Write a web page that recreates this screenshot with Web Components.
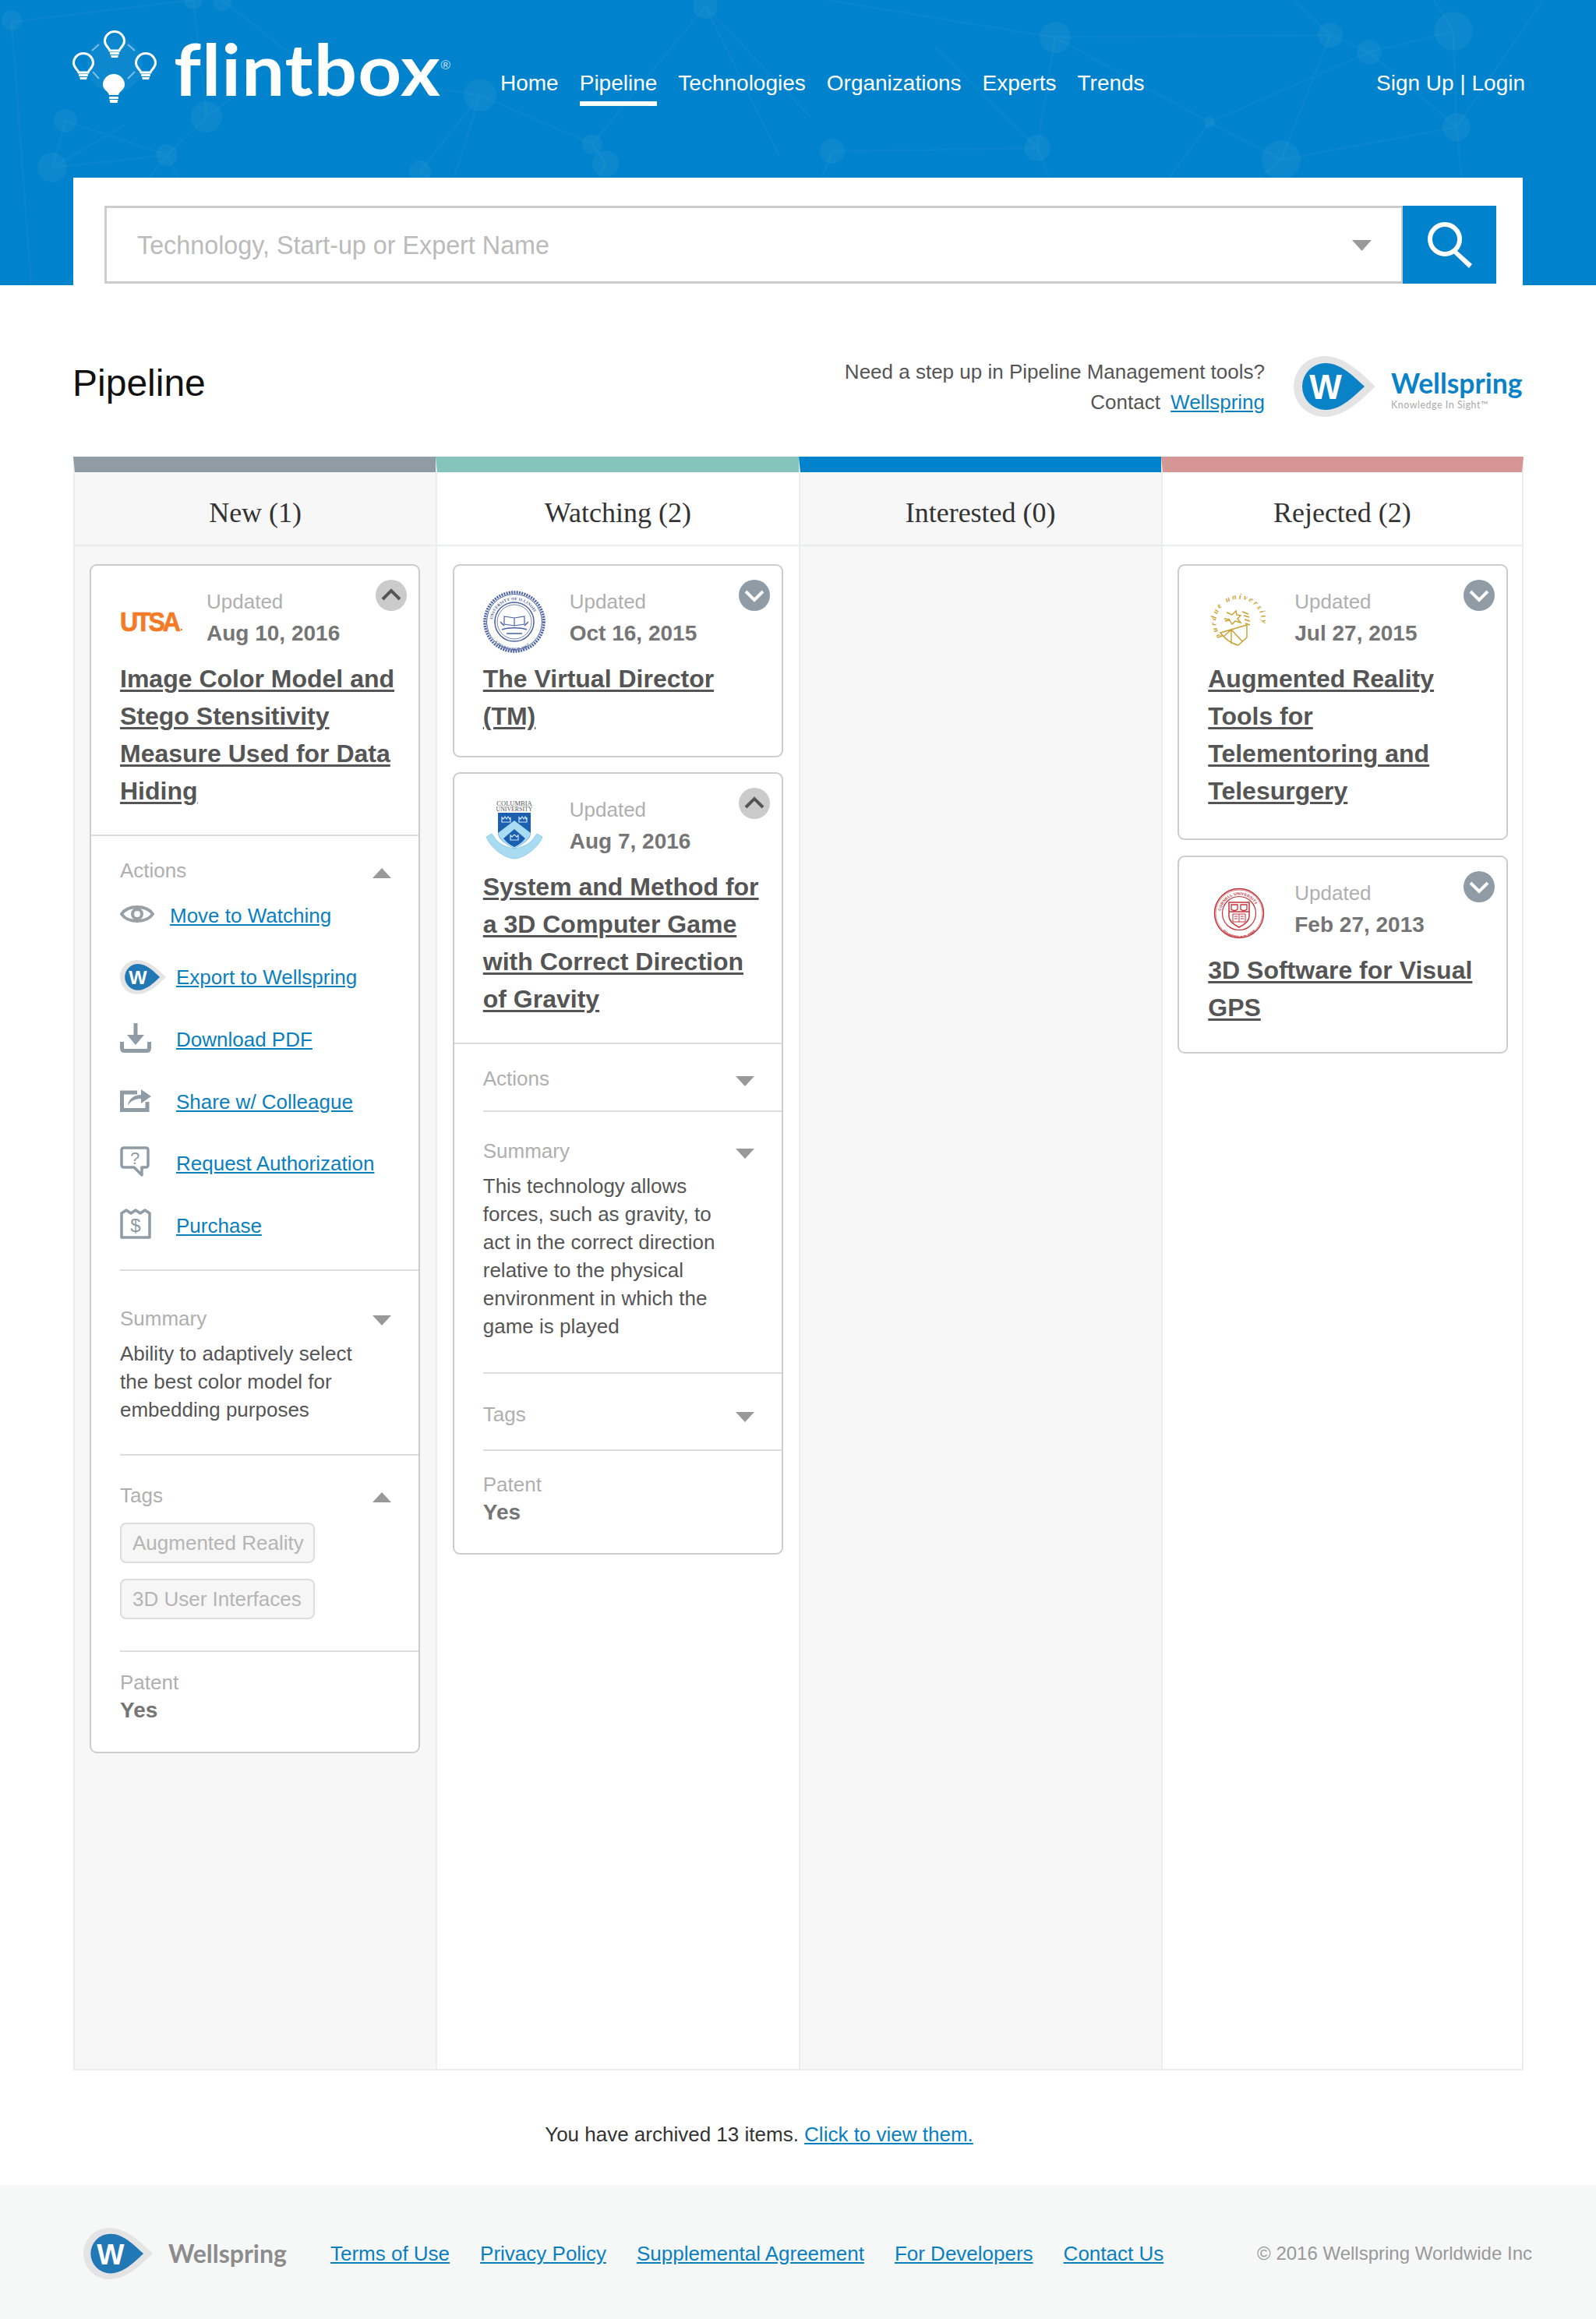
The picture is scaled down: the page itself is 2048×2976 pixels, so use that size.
<!DOCTYPE html>
<html lang="en">
<head>
<meta charset="utf-8">
<title>Flintbox Pipeline</title>
<style>
    html, body { margin: 0; background: #fff; }
    body { font-family: 'Liberation Sans', Arial, sans-serif; color: #555; }
</style>
</head>
<body>
<fb-page>
    <fb-header active="Pipeline"></fb-header>
    <fb-intro></fb-intro>
    <fb-board>
        <fb-column label="New (1)" stripe="#8f9ca5" tint>
            <fb-card org="utsa" date="Aug 10, 2016" heading="Image Color Model and Stego Stensitivity Measure Used for Data Hiding" open style="--tb:32px">
                <fb-section label="Actions" arrow="up" full style="--pt:26px;--pb:16px">
                    <fb-action icon="eye" href="#" narrow>Move to Watching</fb-action>
                    <fb-action icon="wellspring" href="#">Export to Wellspring</fb-action>
                    <fb-action icon="download" href="#">Download PDF</fb-action>
                    <fb-action icon="share" href="#">Share w/ Colleague</fb-action>
                    <fb-action icon="question" href="#">Request Authorization</fb-action>
                    <fb-action icon="purchase" href="#">Purchase</fb-action>
                </fb-section>
                <fb-section label="Summary" arrow="down" style="--pt:43px;--pb:39px">
                    <fb-text>Ability to adaptively select the best color model for embedding purposes</fb-text>
                </fb-section>
                <fb-section label="Tags" arrow="up" style="--pt:33px;--pb:40px">
                    <fb-tags>
                        <fb-tag>Augmented Reality</fb-tag>
                        <fb-tag>3D User Interfaces</fb-tag>
                    </fb-tags>
                </fb-section>
                <fb-patent value="Yes" style="--pt:21px;--pb:35px"></fb-patent>
            </fb-card>
        </fb-column>
        <fb-column label="Watching (2)" stripe="#84c4bc">
            <fb-card org="illinois" date="Oct 16, 2015" heading="The Virtual Director (TM)" style="--tb:27px"></fb-card>
            <fb-card org="columbia" date="Aug 7, 2016" heading="System and Method for a 3D Computer Game with Correct Direction of Gravity" open style="--tb:32px">
                <fb-section label="Actions" arrow="down" full style="--pt:26px;--pb:23px"></fb-section>
                <fb-section label="Summary" arrow="down" style="--pt:32px;--pb:41px">
                    <fb-text>This technology allows forces, such as gravity, to act in the correct direction relative to the physical environment in which the game is played</fb-text>
                </fb-section>
                <fb-section label="Tags" arrow="down" style="--pt:34px;--pb:27px"></fb-section>
                <fb-patent value="Yes" style="--pt:25px;--pb:34px"></fb-patent>
            </fb-card>
        </fb-column>
        <fb-column label="Interested (0)" stripe="#0082cc" tint></fb-column>
        <fb-column label="Rejected (2)" stripe="#d59694">
            <fb-card org="purdue" date="Jul 27, 2015" heading="Augmented Reality Tools for Telementoring and Telesurgery" style="--tb:37px"></fb-card>
            <fb-card org="cornell" date="Feb 27, 2013" heading="3D Software for Visual GPS" style="--tb:33px;margin-top:1px"></fb-card>
        </fb-column>
    </fb-board>
    <fb-archive count="13"></fb-archive>
    <fb-footer></fb-footer>
</fb-page>

<script>
// Small helper: every element gets an open shadow root filled from one render()
class FbElement extends HTMLElement {
    constructor() {
        super();
        this.root = this.attachShadow({ mode: 'open' });
    }
    connectedCallback() {
        this.root.innerHTML = this.render();
    }
}

class FbPage extends FbElement {
    render() {
        return `<style>:host { display: block; width: 2048px; }</style><slot></slot>`;
    }
}

class WellspringMark extends FbElement {
    render() {
        const w = this.getAttribute('width') || 105;
        const blue = this.getAttribute('blue') || '#0a82c8';
        return `
            <style>:host { display: block; line-height: 0; } svg { display: block; }</style>
            <svg width="${w}" viewBox="0 0 105 78">
                <path d="M105 39C85 20 65 0 39 0A39 39 0 0 0 39 78C65 78 85 58 105 39Z" fill="#e4e4e4"/>
                <path d="M91 39C76 25 60 9 41 9A30 30 0 0 0 41 69C60 69 76 53 91 39Z" fill="${blue}"/>
                <text x="41" y="55" text-anchor="middle" font-family="Liberation Sans, sans-serif" font-weight="700" font-size="44" fill="#fff">W</text>
            </svg>`;
    }
}

class FbHeader extends FbElement {
    render() {
        const active = this.getAttribute('active');
        const links = ['Home', 'Pipeline', 'Technologies', 'Organizations', 'Experts', 'Trends']
            .map(t => `<a href="#" class="${t === active ? 'on' : ''}">${t}</a>`).join('');
        return `
            <style>
                :host { display: block; height: 366px; background: #0082cc; position: relative; overflow: hidden; }
                .net { position: absolute; left: 0; top: 0; }
                .bar { position: relative; height: 228px; display: flex; align-items: flex-start; padding-right: 91px; box-sizing: border-box; }
                .bulbs { margin: 30px 0 0 90px; flex: none; }
                .word { flex: none; width: 350px; margin: 38px 0 0 18px; font: 700 92px/100px Lato, sans-serif; color: #fff; letter-spacing: 1px; position: relative; transform: scaleX(1.06); transform-origin: left top; }
                .word sup { position: absolute; left: 323px; top: 37px; font: 400 16px/18px 'Liberation Sans', sans-serif; letter-spacing: 0; opacity: .75; }
                nav { display: flex; gap: 27px; margin: 88px 0 0 69px; }
                a { color: #fff; text-decoration: none; font-size: 28px; line-height: 38px; display: block; }
                nav a { height: 48px; box-sizing: border-box; }
                nav a.on { border-bottom: 6px solid #fff; }
                .auth { margin: 88px 0 0 auto; font-size: 28px; line-height: 38px; color: #fff; white-space: nowrap; }
                .auth a { display: inline; }
                .panel { position: relative; width: 1860px; height: 138px; margin-left: 94px; background: #fff; padding: 36px 34px 0 40px; box-sizing: border-box; display: flex; }
                .field { flex: 1; height: 100px; box-sizing: border-box; border: 3px solid #ccc; border-right-width: 2px; display: flex; align-items: center; padding: 2px 38px 0 39px; font-size: 32.300px; color: #bbb; }
                .field span { flex: 1; }
                .go { width: 120px; height: 100px; background: #0082cc; display: flex; align-items: center; justify-content: center; flex: none; }
            </style>
            <svg class="net" width="2048" height="366" fill="none">
                <g stroke="#fff" stroke-opacity=".03" stroke-width="3">
                    <path d="M15 28L248 0M15 28L40 366M248 0L265 150M285 0L400 90L616 122M84 155L214 199L265 150M84 155L67 215L214 199L300 366M265 150L350 85M616 122L540 366M616 122L760 185L777 210M777 210L700 366M760 185L905 8M905 8L1000 200M905 8L1040 150M1068 194L1331 190M1068 194L1000 366M1354 48L1707 45M1354 48L1060 0M1354 48L1552 157L1644 205M1354 48L1331 190L1400 366M1331 190L1200 60M1552 157L1757 67M1552 157L1400 366M1644 205L1869 163M1644 205L1707 45M1644 205L1450 366M1757 67L1865 40M1757 67L1869 163M1865 40L1869 163M1707 45L1757 67M1707 45L1660 0M1865 40L1840 0M1869 163L1890 366M1869 163L1980 0M539 220L777 366M539 220L616 122M160 160L67 215M214 199L84 366"/>
                </g>
                <g fill="#fff" fill-opacity=".05">
                    <circle cx="15" cy="26" r="13"/><circle cx="248" cy="0" r="12"/><circle cx="285" cy="2" r="12"/><circle cx="905" cy="8" r="16"/>
                    <circle cx="616" cy="122" r="21"/><circle cx="265" cy="150" r="20"/><circle cx="84" cy="155" r="15"/><circle cx="67" cy="215" r="19"/>
                    <circle cx="214" cy="199" r="14"/><circle cx="760" cy="185" r="13"/><circle cx="777" cy="210" r="17"/><circle cx="539" cy="220" r="14"/>
                    <circle cx="1354" cy="48" r="20"/><circle cx="1707" cy="45" r="16"/><circle cx="1757" cy="67" r="16"/><circle cx="1865" cy="40" r="25"/>
                    <circle cx="1552" cy="157" r="7"/><circle cx="1869" cy="163" r="18"/><circle cx="1644" cy="205" r="25"/><circle cx="1331" cy="190" r="17"/><circle cx="1068" cy="194" r="16"/>
                </g>
            </svg>
            <div class="bar">
                <svg class="bulbs" width="115" height="105" viewBox="90 30 115 105" fill="none" stroke="#fff">
                    <circle cx="147" cy="83" r="36" fill="#fff" fill-opacity=".05" stroke="none"/>
                    <path d="M127 57L118 65M164 57L173 65M119 92L127 101M173 92L164 101" stroke-width="2" stroke-opacity=".45"/>
                    <g stroke-width="3">
                        <path transform="translate(147 54)" d="M-6 11C-7 7-12.500 5-12.500-1A12.500 12.500 0 1 1 12.500-1C12.500 5 7 7 6 11Z"/>
                        <path transform="translate(107 82)" d="M-6 11C-7 7-12.500 5-12.500-1A12.500 12.500 0 1 1 12.500-1C12.500 5 7 7 6 11Z"/>
                        <path transform="translate(187 82)" d="M-6 11C-7 7-12.500 5-12.500-1A12.500 12.500 0 1 1 12.500-1C12.500 5 7 7 6 11Z"/>
                    </g>
                    <g fill="#fff" stroke="none">
                        <rect x="141" y="67" width="12" height="3" rx="1"/><path d="M142 71h10l-1 3h-8z"/>
                        <rect x="101" y="95" width="12" height="3" rx="1"/><path d="M102 99h10l-1 3h-8z"/>
                        <rect x="181" y="95" width="12" height="3" rx="1"/><path d="M182 99h10l-1 3h-8z"/>
                        <path d="M140 122C139 117 132 115 132 109A14 14 0 1 1 160 109C160 115 153 117 152 122Z"/>
                        <rect x="140" y="124" width="12" height="3" rx="1"/><path d="M140.500 128h11l-1 4h-9z"/>
                    </g>
                </svg>
                <div class="word">flintbox<sup>®</sup></div>
                <nav>${links}</nav>
                <div class="auth"><a href="#">Sign Up</a> | <a href="#">Login</a></div>
            </div>
            <div class="panel">
                <div class="field">
                    <span>Technology, Start-up or Expert Name</span>
                    <svg width="25" height="14" viewBox="0 0 25 14"><path d="M0 0H25L12.500 14Z" fill="#999"/></svg>
                </div>
                <div class="go">
                    <svg width="60" height="60" viewBox="0 0 60 60" fill="none" stroke="#fff">
                        <circle cx="24" cy="23" r="19" stroke-width="6"/>
                        <path d="M35 41L40 38L59 55L55 60Z" fill="#fff" stroke="none"/>
                    </svg>
                </div>
            </div>`;
    }
}

class FbIntro extends FbElement {
    render() {
        return `
            <style>
                :host { display: flex; align-items: center; height: 220px; box-sizing: border-box; padding: 40px 93px 0 93px; }
                h1 { margin: -8px auto 0 0; font-weight: 400; font-size: 48px; line-height: 56px; color: #111; }
                .pitch { text-align: right; font-size: 26px; line-height: 39px; color: #555; margin-top: 2px; }
                a { color: #0a7fc0; margin-left: 6px; }
                .brand { display: flex; align-items: center; margin-left: 37px; }
                .name { margin: 8px 0 0 20px; width: 170px; }
                .name b { display: block; font: 700 35.500px/38px Lato, sans-serif; color: #0a82c8; white-space: nowrap; }
                .name small { display: block; font: 400 12.500px/14px Lato, sans-serif; color: #aaa; letter-spacing: .5px; margin-top: 2px; }
            </style>
            <h1>Pipeline</h1>
            <div class="pitch">Need a step up in Pipeline Management tools?<br>Contact <a href="#">Wellspring</a></div>
            <div class="brand">
                <wellspring-mark width="105"></wellspring-mark>
                <div class="name"><b>Wellspring</b><small>Knowledge In Sight™</small></div>
            </div>`;
    }
}

class FbBoard extends FbElement {
    render() {
        return `
            <style>
                :host { display: grid; grid-template-columns: repeat(4, 465.250px); width: 1861px; height: 2071px; margin-left: 94px; }
            </style>
            <slot></slot>`;
    }
}

class FbColumn extends FbElement {
    render() {
        return `
            <style>
                :host { display: flex; flex-direction: column; box-sizing: border-box; border-top: 20px solid ${this.getAttribute('stripe')}; border-left: 2px solid #eceded; border-bottom: 2px solid #eceded; background: #fff; min-width: 0; }
                :host([tint]) { background: #f7f7f7; }
                :host(:last-child) { border-right: 2px solid #eceded; }
                h2 { margin: 0; height: 93px; border-bottom: 2px solid #eceded; font: 400 36px/104px 'Liberation Serif', serif; color: #333; text-align: center; flex: none; }
                .cards { display: flex; flex-direction: column; gap: 19px; padding: 23px 0 0 19.500px; }
                :host(:first-child) .cards { padding-left: 19px; }
            </style>
            <h2>${this.getAttribute('label')}</h2>
            <div class="cards"><slot></slot></div>`;
    }
}

class OrgLogo extends FbElement {
    render() {
        const sans = 'Liberation Sans, sans-serif';
        const serif = 'Liberation Serif, serif';
        const logos = {
            utsa: `<text transform="translate(0 52) scale(.92 1)" font-family="${sans}" font-weight="700" font-size="35" letter-spacing="-3.500" stroke="#f47b25" stroke-width=".7" fill="#f47b25">UTSA</text><circle cx="79" cy="50" r="1.200" fill="#f47b25"/>`,
            illinois: `
                <g fill="none" stroke="#4a62a4">
                    <circle cx="40" cy="40" r="38" stroke-width="3.500" stroke-dasharray="2 1.300"/>
                    <circle cx="40" cy="40" r="35.500" stroke-width="1"/>
                    <circle cx="40" cy="40" r="25" stroke-width="1.500"/>
                    <circle cx="40" cy="40" r="22" stroke-width=".8"/>
                    <path d="M27 33l13 2 13-2v10l-13 2-13-2zM40 35v10" stroke-width="1.200"/>
                    <path d="M24 50c8-3 24-3 32 0M30 55h20M22 40l5 5M58 40l-5 5" stroke-width="1.500"/>
                </g>
                <path id="ilT" d="M12 40A28 28 0 0 1 68 40" fill="none"/>
                <path id="ilB" d="M7 44A33 33 0 0 0 73 44" fill="none"/>
                <text font-family="${serif}" font-weight="700" font-size="5.200" letter-spacing=".3" fill="#3f5599"><textPath href="#ilT" startOffset="3">UNIVERSITY OF ILLINOIS</textPath></text>
                <text font-family="${serif}" font-weight="700" font-size="5.200" letter-spacing=".3" fill="#3f5599"><textPath href="#ilB" startOffset="24">CHARTERED 1867</textPath></text>`,
            columbia: `
                <text x="40" y="9" text-anchor="middle" font-family="${serif}" font-size="8.500" fill="#555">COLUMBIA</text>
                <text x="40" y="16" text-anchor="middle" font-family="${serif}" font-size="7.800" fill="#555">UNIVERSITY</text>
                <path d="M4 49c3 9 18 26 36 28 18-2 33-19 36-28l-7-4-5 7c-6 7-15 11-24 12-9-1-18-5-24-12l-5-7z" fill="#a9dcf2" stroke="#8ecfe9"/>
                <path d="M19 18H61V44C61 52 50 59 40 64 30 59 19 52 19 44Z" fill="#1a5fb0"/>
                <path d="M40 28L61 44C60 52 50 59 40 64 30 59 20 52 19 44Z" fill="#a9dcf2"/>
                <path d="M40 39L54 51C50 56 46 59 40 62 34 59 30 56 26 51Z" fill="#1a5fb0"/>
                <g fill="none" stroke="#cfe8f6" stroke-width="1.200">
                    <path d="M24 24l2 2 2-3 2 3 2-3 2 3 1-2v6H24zM46 24l2 2 2-3 2 3 2-3 1 3 1-2v6H46z"/>
                    <path d="M35 47l2 2 3-3 3 3 2-2v6H35z"/>
                </g>`,
            purdue: `
                <path id="puC" d="M17 59A29.500 29.500 0 1 1 54 66" fill="none"/>
                <text font-family="${serif}" font-style="italic" font-weight="700" font-size="10" letter-spacing="2.600" fill="#c8a02e"><textPath href="#puC">purdue university</textPath></text>
                <g fill="none" stroke="#c8a02e" stroke-width="1.400">
                    <path d="M16 54L50 44 50 60 39 70C30 68 22 62 16 54ZM30 50L30 68M30 50L44 65M30 50L20 59"/>
                    <path d="M24 28l7 3 5-5 1 5 5 1-4 4 4 5-7-2-4 4-3-5-6 1M21 36l7 1M44 27l8 3M46 32l7 2M47 37l7 2M48 42l6 2"/>
                </g>`,
            cornell: `
                <g fill="none" stroke="#c5333a">
                    <circle cx="40" cy="40" r="31.500" stroke-width="1.500"/>
                    <circle cx="40" cy="40" r="30" stroke-width=".6"/>
                    <circle cx="40" cy="40" r="21.500" stroke-width="1.200"/>
                    <path d="M27 26H53V44C53 51 46 55 40 58 34 55 27 51 27 44Z" stroke-width="1.500"/>
                    <path d="M27 38H53M30 29h8v6c-2 2-6 2-8 0zM42 29h8v6c-2 2-6 2-8 0z" stroke-width="1.300"/>
                    <path d="M32 41h16v10H32zM40 41v10M34 44h4M34 47h4M42 44h4M42 47h4" stroke-width="1"/>
                </g>
                <path id="coT" d="M16.500 40A23.500 23.500 0 0 1 63.500 40" fill="none"/>
                <path id="coB" d="M11 43A29 29 0 0 0 69 43" fill="none"/>
                <text font-family="${sans}" font-weight="700" font-size="5" letter-spacing=".2" fill="#c5333a"><textPath href="#coT" startOffset="3">CORNELL UNIVERSITY</textPath></text>
                <text font-family="${sans}" font-weight="700" font-size="4.500" letter-spacing=".2" fill="#c5333a"><textPath href="#coB" startOffset="22">FOUNDED A.D. 1865</textPath></text>`
        };
        return `
            <style>:host { display: block; width: 80px; height: 80px; } svg { display: block; }</style>
            <svg width="80" height="80" viewBox="0 0 80 80">${logos[this.getAttribute('kind')]}</svg>`;
    }
}

class FbCard extends FbElement {
    render() {
        const open = this.hasAttribute('open');
        return `
            <style>
                :host { display: block; width: 424px; box-sizing: border-box; border: 2px solid #ccc; border-radius: 9px; background: #fff; position: relative; }
                .toggle { position: absolute; right: 15px; top: 18px; display: block; }
                .head { display: flex; padding: 27px 0 0 37px; }
                org-logo { flex: none; margin: 5px 31px 0 0; }
                .meta { font-size: 26px; line-height: 39px; color: #afafaf; }
                .meta b { display: block; color: #757575; font-size: 28px; margin-top: 1px; }
                h3 { margin: 0; padding: 9px 25px var(--tb) 37px; font-size: 32px; line-height: 48px; font-weight: 700; }
                h3 a { color: #555; text-decoration-thickness: 3px; text-underline-offset: 3px; }
            </style>
            <svg class="toggle" width="40" height="40" viewBox="0 0 40 40" fill="none">
                <circle cx="20" cy="20" r="20" fill="${open ? '#cbcbcb' : '#8f9ca5'}"/>
                <path d="${open ? 'M9 25L20 14 31 25' : 'M9 15L20 26 31 15'}" stroke="${open ? '#555' : '#fff'}" stroke-width="4"/>
            </svg>
            <div class="head">
                <org-logo kind="${this.getAttribute('org')}"></org-logo>
                <div class="meta">Updated<b>${this.getAttribute('date')}</b></div>
            </div>
            <h3><a href="#">${this.getAttribute('heading')}</a></h3>
            <slot></slot>`;
    }
}

class FbSection extends FbElement {
    render() {
        const up = this.getAttribute('arrow') === 'up';
        return `
            <style>
                :host { display: block; border-top: 2px solid #ddd; margin-left: 37px; padding: var(--pt) 35px var(--pb) 0; }
                :host([full]) { margin-left: 0; padding-left: 37px; }
                .top { display: flex; justify-content: space-between; align-items: center; font-size: 26px; line-height: 36px; color: #afafaf; }
                svg { display: block; margin-top: 6px; }
            </style>
            <div class="top">
                <span>${this.getAttribute('label')}</span>
                <svg width="24" height="13" viewBox="0 0 24 13"><path d="${up ? 'M0 13L12 0 24 13Z' : 'M0 0H24L12 13Z'}" fill="#999"/></svg>
            </div>
            <slot></slot>`;
    }
}

const ACTION_ICONS = {
    eye: `<svg width="44" height="30" viewBox="0 0 44 30" fill="none" stroke="#999fa4" stroke-width="4"><path d="M2 15C10 3 34 3 42 15 34 27 10 27 2 15Z"/><circle cx="22" cy="15" r="6"/></svg>`,
    wellspring: `<wellspring-mark width="59" blue="#2277b5"></wellspring-mark>`,
    download: `<svg width="40" height="38" viewBox="0 0 40 38" fill="none" stroke="#8f9ca5"><path d="M20 0V20" stroke-width="5"/><path d="M9 15H31L20 28Z" fill="#8f9ca5" stroke="none"/><path d="M2.500 24V32Q2.500 35.500 6 35.500H34Q37.500 35.500 37.500 32V24" stroke-width="5"/></svg>`,
    share: `<svg width="40" height="30" viewBox="0 0 40 30" fill="none"><path d="M22 5H2.500V27.500H35V17" stroke="#8f9ca5" stroke-width="5"/><path d="M10 22C11 13 18 8 27 8V1L40 10 27 19V13C20 13 14 15 10 22Z" fill="#8f9ca5"/></svg>`,
    question: `<svg width="38" height="40" viewBox="0 0 38 40" fill="none"><path d="M5 2H33Q36 2 36 5V24Q36 27 33 27H28V37L18 27H5Q2 27 2 24V5Q2 2 5 2Z" stroke="#8f9ca5" stroke-width="3.500" stroke-linejoin="round"/><text x="19" y="23" text-anchor="middle" font-family="Liberation Sans, sans-serif" font-size="22" fill="#8f9ca5">?</text></svg>`,
    purchase: `<svg width="40" height="40" viewBox="0 0 40 40" fill="none"><path d="M2 6L8 2 14 6 20 2 26 6 32 2 38 6V37H2Z" stroke="#8f9ca5" stroke-width="3.500" stroke-linejoin="round"/><text x="20" y="30" text-anchor="middle" font-family="Liberation Sans, sans-serif" font-size="24" fill="#8f9ca5">$</text></svg>`
};

class FbAction extends FbElement {
    render() {
        return `
            <style>
                :host { display: flex; align-items: center; height: 79.600px; }
                .ico { flex: none; width: 72px; }
                :host([narrow]) .ico { width: 64px; }
                a { color: #0a7fc0; font-size: 26px; line-height: 36px; }
            </style>
            <div class="ico">${ACTION_ICONS[this.getAttribute('icon')]}</div>
            <a href="${this.getAttribute('href')}"><slot></slot></a>`;
    }
}

class FbText extends FbElement {
    render() {
        return `
            <style>:host { display: block; max-width: 320px; margin-top: 9px; font-size: 26px; line-height: 36px; color: #555; }</style>
            <slot></slot>`;
    }
}

class FbTags extends FbElement {
    render() {
        return `
            <style>:host { display: inline-flex; flex-direction: column; gap: 20px; margin-top: 17px; }</style>
            <slot></slot>`;
    }
}

class FbTag extends FbElement {
    render() {
        return `
            <style>:host { display: block; box-sizing: border-box; height: 52px; padding: 0 12px 0 14px; border: 2px solid #ddd; border-radius: 8px; background: #f6f6f6; font-size: 26px; line-height: 48px; color: #b5b5b5; white-space: nowrap; }</style>
            <slot></slot>`;
    }
}

class FbPatent extends FbElement {
    render() {
        return `
            <style>
                :host { display: block; border-top: 2px solid #ddd; margin-left: 37px; padding: var(--pt) 0 var(--pb) 0; font-size: 26px; line-height: 36px; color: #afafaf; }
                b { display: block; font-size: 28px; color: #757575; }
            </style>
            Patent<b>${this.getAttribute('value')}</b>`;
    }
}

class FbArchive extends FbElement {
    render() {
        return `
            <style>
                :host { display: block; height: 147px; box-sizing: border-box; padding: 64px 100px 0 0; text-align: center; font-size: 26px; line-height: 36px; color: #333; }
                a { color: #0a7fc0; }
            </style>
            You have archived ${this.getAttribute('count')} items. <a href="#">Click to view them.</a>`;
    }
}

class FbFooter extends FbElement {
    render() {
        const links = ['Terms of Use', 'Privacy Policy', 'Supplemental Agreement', 'For Developers', 'Contact Us']
            .map(t => `<a href="#">${t}</a>`).join('');
        return `
            <style>
                :host { display: flex; align-items: center; height: 172px; box-sizing: border-box; background: #f6f7f7; padding: 4px 82px 0 107px; }
                .name { margin-left: 20px; font: 700 32px/36px Lato, sans-serif; color: #8c8c8c; }
                nav { display: flex; gap: 39px; margin-left: 56px; }
                a { color: #0a7fc0; font-size: 26px; line-height: 36px; }
                .copy { margin-left: auto; font-size: 24px; color: #999; }
            </style>
            <wellspring-mark width="89" blue="#2277b5"></wellspring-mark>
            <span class="name">Wellspring</span>
            <nav>${links}</nav>
            <span class="copy">© 2016 Wellspring Worldwide Inc</span>`;
    }
}

customElements.define('fb-page', FbPage);
customElements.define('wellspring-mark', WellspringMark);
customElements.define('fb-header', FbHeader);
customElements.define('fb-intro', FbIntro);
customElements.define('fb-board', FbBoard);
customElements.define('fb-column', FbColumn);
customElements.define('org-logo', OrgLogo);
customElements.define('fb-card', FbCard);
customElements.define('fb-section', FbSection);
customElements.define('fb-action', FbAction);
customElements.define('fb-text', FbText);
customElements.define('fb-tags', FbTags);
customElements.define('fb-tag', FbTag);
customElements.define('fb-patent', FbPatent);
customElements.define('fb-archive', FbArchive);
customElements.define('fb-footer', FbFooter);
</script>
</body>
</html>
